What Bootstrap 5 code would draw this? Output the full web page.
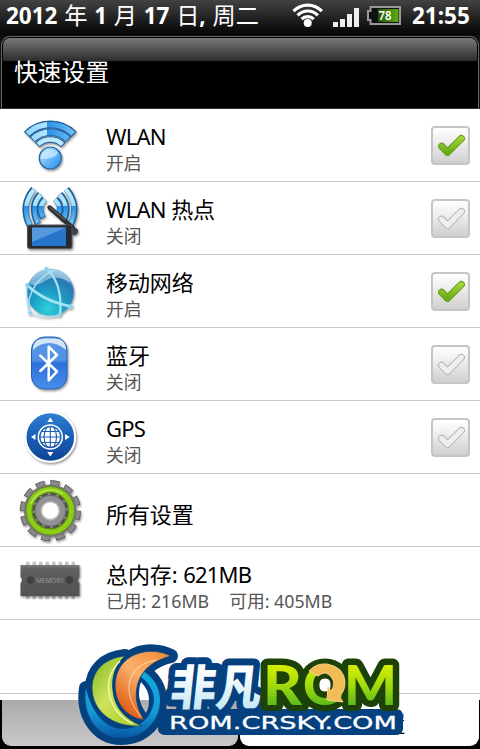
<!DOCTYPE html>
<html lang="zh-CN">

<head>
    <meta charset="UTF-8">
    <meta name="viewport" content="width=device-width, initial-scale=1.0">
    <title>快速设置</title>
    <link href="https://cdn.jsdelivr.net/npm/bootstrap@5.3.3/dist/css/bootstrap.min.css" rel="stylesheet">
    <style>
        body {
            background: #fff;
            font-family: "Noto Sans", "Noto Sans CJK SC", sans-serif;
            color: #000;
        }

        .phone {
            width: 480px;
            height: 749px;
        }

        .status-bar {
            height: 35px;
            padding: 0 8px 4px 6px;
            background: linear-gradient(#424242, #101010 80%, #050505);
            font-size: 23.2px;
            line-height: 31px;
            word-spacing: .7px;
        }

        .status-bar b {
            font-size: 22.5px;
            font-weight: 700;
        }

        .clock {
            width: 60px;
            margin-left: 8px;
        }

        .title-wrap {
            height: 74px;
            background: #111;
            padding: 1px 1px 0;
        }

        .title-bar {
            height: 73px;
            padding: 1px 0 0 12px;
            border: 1px solid #666;
            border-bottom-color: #333;
            border-radius: 9px 9px 0 0;
            box-shadow: inset 0 0 0 1px #000;
            background: linear-gradient(#7c7c7c, #2c2c2c 24px, #000 24px);
            font-size: 23.8px;
        }

        .setting {
            height: 73px;
            border-bottom: 1px solid #c9c9c9;
        }

        .setting.blank {
            height: 74px;
        }

        .setting > svg {
            width: 100px;
            height: 72px;
        }

        .texts {
            padding-top: 7px;
        }

        .label {
            padding-left: 6px;
            font-size: 22px;
            line-height: 28px;
            letter-spacing: -.1px;
        }

        .label i,
        .state i {
            font-style: normal;
            letter-spacing: -.8px;
        }

        .state {
            padding: 1px 0 0 6px;
            color: #555;
            font-size: 17.8px;
            line-height: 25px;
        }

        .state i {
            letter-spacing: 0;
        }

        .state .free {
            margin-left: 20px;
        }

        .tick {
            width: 39px;
            height: 39px;
            margin-right: 10px;
            border: 2px solid #c5c5c5;
            border-radius: 4px;
            background: linear-gradient(#fff, #f0f0f0 35%, #cfcfcf);
        }

        .tabs {
            height: 49px;
            background: #000;
            padding: 0 1px 3px 2px;
            gap: 2px;
        }

        .tab-left {
            width: 236px;
            border-radius: 0 0 9px 9px;
            background: linear-gradient(#aaa, #c9c9c9);
        }

        .tab-right {
            border-radius: 0 0 9px 9px;
            background: #fff;
            font-size: 22px;
            line-height: 30px;
            padding: 8px 0 0 4px;
        }

        .logo {
            left: 70px;
            top: 635px;
        }
    </style>
</head>

<body>
    <svg width="0" height="0" class="position-absolute">
        <defs>
            <linearGradient id="ball" x1="0" y1="0" x2="1" y2="1">
                <stop offset="0" stop-color="#c3e8ff" />
                <stop offset=".45" stop-color="#75c0fb" />
                <stop offset="1" stop-color="#218be8" />
            </linearGradient>
            <linearGradient id="half" gradientUnits="userSpaceOnUse" x1="26" y1="0" x2="76" y2="0">
                <stop offset="0" stop-color="#8fd2fb" />
                <stop offset=".42" stop-color="#b5e7ff" />
                <stop offset=".43" stop-color="#2e93e8" />
                <stop offset="1" stop-color="#6fc0f6" />
            </linearGradient>
            <linearGradient id="waves" gradientUnits="userSpaceOnUse" x1="0" y1="6" x2="0" y2="44">
                <stop offset="0" stop-color="#c0edff" />
                <stop offset=".46" stop-color="#a5dffc" />
                <stop offset=".47" stop-color="#248fe6" />
                <stop offset="1" stop-color="#7ccbf8" />
            </linearGradient>
            <linearGradient id="green" x1="0" y1="0" x2="0" y2="1">
                <stop offset="0" stop-color="#a0d23a" />
                <stop offset="1" stop-color="#6dab14" />
            </linearGradient>
            <filter id="soft" x="-20%" y="-20%" width="140%" height="150%">
                <feDropShadow dx="1" dy="1.5" stdDeviation="1.2" flood-opacity=".45" />
            </filter>
            <symbol id="tickmark" viewBox="0 0 35 35">
                <path d="M8.700 18.300l5.800 6L28.300 10.500" fill="none" stroke-linecap="round" stroke-linejoin="round" stroke="var(--edge)" stroke-width="7.200" />
                <path d="M8.700 18.300l5.800 6L28.300 10.500" fill="none" stroke-linecap="round" stroke-linejoin="round" stroke="var(--ink)" stroke-width="5.400" />
            </symbol>
        </defs>
    </svg>

    <div class="phone position-relative overflow-hidden d-flex flex-column">
        <div class="status-bar d-flex align-items-center text-white text-nowrap">
            <div><b>2012</b> 年 <b>1</b> 月 <b>17</b> 日<b>,</b> 周二</div>
            <svg class="ms-auto" width="112" height="31" viewBox="292 0 112 31">
                <g fill="none" stroke="#fff" stroke-width="3.200">
                    <path d="M293.500 11.200a19.500 19.500 0 0 1 28.400 0" />
                    <path d="M297.600 15.300a14 14 0 0 1 20.200 0" />
                    <path d="M301.600 19.200a8.500 8.500 0 0 1 12.200 0" />
                </g>
                <circle cx="307.700" cy="23" r="4" fill="#fff" />
                <path d="M333 22h5v5h-5zM340 19h5v8h-5zM347 14h5v13h-5zM354 8h5v19h-5z" fill="#eee" />
                <path d="M370.500 7H400v17H370.500v-4H368v-9h2.500z" fill="#111" stroke="#999" stroke-width="2" />
                <linearGradient id="charge">
                    <stop offset="0" stop-color="#23550b" />
                    <stop offset="1" stop-color="#5fae13" />
                </linearGradient>
                <path d="M378 9h20.500v13H378z" fill="url(#charge)" />
                <text x="385" y="20" text-anchor="middle" font-size="12.500" font-weight="600" fill="#fff" textLength="13" lengthAdjust="spacingAndGlyphs" word-spacing="0">78</text>
            </svg>
            <b class="clock">21:55</b>
        </div>
        <div class="title-wrap">
            <div class="title-bar d-flex align-items-center text-white">快速设置</div>
        </div>

        <!-- Liste des réglages -->
        <div class="setting d-flex align-items-center">
            <svg viewBox="0 0 100 72">
                <g fill="none" filter="url(#soft)">
                    <g stroke="#1d5c98" stroke-width="7.600">
                        <path d="M26.600 25.300a33 33 0 0 1 47.400 0M32 30.700a25.500 25.500 0 0 1 36.600 0" />
                        <path d="M37.300 36a18 18 0 0 1 26 0" stroke-width="6.600" />
                    </g>
                    <g stroke="url(#half)" stroke-width="5.600">
                        <path d="M27.400 24.700a33 33 0 0 1 45.800 0M32.800 30.100a25.500 25.500 0 0 1 35 0" />
                        <path d="M38 35.400a18 18 0 0 1 24.600 0" stroke="#bce9fd" stroke-width="4.600" />
                    </g>
                    <circle cx="50.300" cy="49" r="11" fill="url(#ball)" stroke="#28659e" stroke-width="1.200" />
                    <path d="M41 50a9.500 9.500 0 0 1 17-6q-3 6-17 6z" fill="#e1f5ff" opacity=".6" />
                </g>
            </svg>
            <div class="texts flex-grow-1">
                <div class="label"><i>WLAN</i></div>
                <div class="state">开启</div>
            </div>
            <div class="tick" style="--edge:#5c9c12;--ink:url(#green)"><svg class="d-block" width="35" height="35"><use href="#tickmark" /></svg></div>
        </div>
        <div class="setting d-flex align-items-center">
            <svg viewBox="0 0 100 72">
                <g fill="none" filter="url(#soft)">
                    <path d="M33.500 7Q19.500 24 30 44M40 12Q29 24 38 42M44.500 17Q36.500 25 43 36M66.500 7Q80.500 24 70 44M60 12Q71 24 63 40M55.500 17Q63.500 25 58 33" stroke="#205f93" stroke-width="6.200" />
                    <path d="M34 7.700Q20.500 24 30 43M40.500 12.700Q30 24 38 41M45 17.700Q37.500 25 43 35M66 7.700Q79.500 24 70 43M59.500 12.700Q70 24 63 39M55 17.700Q62.500 25 58 32" stroke="url(#waves)" stroke-width="4.200" />
                    <path d="M49.500 25.500L73 46" stroke="#2d2d2d" stroke-width="4.400" stroke-linecap="round" />
                    <path d="M49.500 25L65 38" stroke="#777" stroke-width="1" />
                    <path d="M70 46h5q3 0 3 3t-3 4h-5z" fill="#3b3f43" />
                    <rect x="27.500" y="43" width="44.500" height="23.500" rx="2" fill="#25292e" stroke="#56595d" />
                    <rect x="32" y="45.500" width="34" height="18.500" fill="#2675ca" />
                    <path d="M32 45.500h34L32 60z" fill="#6faee9" opacity=".65" />
                </g>
            </svg>
            <div class="texts flex-grow-1">
                <div class="label"><i>WLAN</i> 热点</div>
                <div class="state">关闭</div>
            </div>
            <div class="tick" style="--edge:#b0b0b0;--ink:#eee"><svg class="d-block" width="35" height="35"><use href="#tickmark" /></svg></div>
        </div>
        <div class="setting d-flex align-items-center">
            <svg viewBox="0 0 100 72">
                <radialGradient id="globe" cx=".45" cy=".85" r=".9">
                    <stop offset="0" stop-color="#2fd0da" />
                    <stop offset=".4" stop-color="#1d9fc5" />
                    <stop offset=".75" stop-color="#2c78b5" />
                    <stop offset="1" stop-color="#8bc6e8" />
                </radialGradient>
                <g filter="url(#soft)">
                    <circle cx="50.300" cy="37.300" r="23.500" fill="url(#globe)" />
                    <path d="M29 29Q34 15 49 14q17 1 22 14Q56 18 43 27q-6 5-14 2z" fill="#e3f7ff" opacity=".45" />
                    <g fill="none" stroke="#a4e3f3" stroke-linecap="round">
                        <path d="M26.500 29.500Q43 46 71 51.500" stroke-width="2.800" />
                        <path d="M46.500 13Q63 29 60 60" stroke-width="2.200" />
                        <path d="M29 59Q26 44 36 29Q44 19 55 15" stroke-width="1.400" />
                        <path d="M27 29q-1 20 3 29 14 6 30 2" stroke-width="1.600" opacity=".7" />
                    </g>
                    <g fill="#8ad5eb">
                        <circle cx="46.500" cy="14" r="2.200" />
                        <circle cx="27.500" cy="30.500" r="1.900" />
                        <circle cx="70.500" cy="51.500" r="2.200" />
                        <circle cx="59.500" cy="59.500" r="2" />
                        <circle cx="30.500" cy="57.500" r="1.700" />
                    </g>
                </g>
            </svg>
            <div class="texts flex-grow-1">
                <div class="label">移动网络</div>
                <div class="state">开启</div>
            </div>
            <div class="tick" style="--edge:#5c9c12;--ink:url(#green)"><svg class="d-block" width="35" height="35"><use href="#tickmark" /></svg></div>
        </div>
        <div class="setting d-flex align-items-center">
            <svg viewBox="0 0 100 72">
                <linearGradient id="bt" x1="0" y1="0" x2="0" y2="1">
                    <stop offset="0" stop-color="#5798e6" />
                    <stop offset=".45" stop-color="#5090e6" />
                    <stop offset=".5" stop-color="#2d6fdc" />
                    <stop offset="1" stop-color="#468eea" />
                </linearGradient>
                <g filter="url(#soft)">
                    <rect x="31.500" y="9" width="35.500" height="52" rx="13" fill="url(#bt)" stroke="#2860ac" />
                    <path d="M33 22Q33 10.500 45 10.500h8.500Q66 10.500 66 22 58 15 49 15T33 22z" fill="#fff" opacity=".75" />
                </g>
                <path d="M40.300 27.700L57 43.500 48.700 52.300V18.700L57 27 40.300 43" fill="none" stroke="#fff" stroke-width="2.500" stroke-linecap="round" stroke-linejoin="round" />
            </svg>
            <div class="texts flex-grow-1">
                <div class="label">蓝牙</div>
                <div class="state">关闭</div>
            </div>
            <div class="tick" style="--edge:#b0b0b0;--ink:#eee"><svg class="d-block" width="35" height="35"><use href="#tickmark" /></svg></div>
        </div>
        <div class="setting d-flex align-items-center">
            <svg viewBox="0 0 100 72">
                <linearGradient id="gps" x1="0" y1="0" x2="0" y2="1">
                    <stop offset="0" stop-color="#3180d3" />
                    <stop offset=".6" stop-color="#1458b0" />
                    <stop offset="1" stop-color="#104591" />
                </linearGradient>
                <circle cx="50.300" cy="36" r="24.800" fill="url(#gps)" stroke="#fff" stroke-width="2" filter="url(#soft)" />
                <circle cx="50.300" cy="36" r="12" fill="none" stroke="#fff" stroke-width="1.500" />
                <circle cx="50.300" cy="36" r="9.800" fill="#fff" />
                <path d="M50.300 26v20M40 36h21M42 30.500h17M42 41.500h17M47 26q-6 10 0 20M53.600 26q6 10 0 20" fill="none" stroke="#1a5eb5" stroke-width="1.100" />
                <path d="M50.300 16.500l3 4.500h-6zM50.300 55.500l3-4.500h-6zM31 36l4.500-3v6zM69.600 36L65 33v6z" fill="#fff" />
            </svg>
            <div class="texts flex-grow-1">
                <div class="label"><i>GPS</i></div>
                <div class="state">关闭</div>
            </div>
            <div class="tick" style="--edge:#b0b0b0;--ink:#eee"><svg class="d-block" width="35" height="35"><use href="#tickmark" /></svg></div>
        </div>
        <div class="setting d-flex align-items-center">
            <svg viewBox="0 0 100 72">
                <g fill="none" filter="url(#soft)">
                    <circle cx="50.300" cy="36.700" r="27.800" stroke="#555" stroke-width="5.600" pathLength="96" stroke-dasharray="5 3" />
                    <circle cx="50.300" cy="36.700" r="27.300" stroke="#8b8b8b" stroke-width="5" pathLength="96" stroke-dasharray="4.300 3.700" stroke-dashoffset="-.350" />
                    <circle cx="50.300" cy="36.700" r="24.800" fill="#8b8b8b" stroke="#777" stroke-width="3" />
                    <circle cx="50.300" cy="36.700" r="21" stroke="#5d8e10" stroke-width="7" />
                    <circle cx="50.300" cy="36.700" r="21.300" stroke="#8ccb18" stroke-width="5" />
                    <path d="M31 30a21 21 0 0 1 32-10" stroke="#b9e553" stroke-width="1.600" />
                    <circle cx="50.300" cy="36.700" r="16.700" stroke="#444" stroke-width="1.600" pathLength="60" stroke-dasharray="3.500 1.500" />
                    <circle cx="50.300" cy="36.700" r="11.700" stroke="#6a6a6a" stroke-width="8" />
                    <circle cx="50.300" cy="36.700" r="12" stroke="#929292" stroke-width="5.500" />
                    <circle cx="50.300" cy="36.700" r="9" fill="#fff" stroke="#bbb" stroke-width="1.500" />
                </g>
            </svg>
            <div class="texts">
                <div class="label">所有设置</div>
            </div>
        </div>
        <div class="setting d-flex align-items-center">
            <svg viewBox="0 0 100 72">
                <path d="M26 16.500h49M26 50.500h49" stroke="#c5c5c5" stroke-width="3.500" stroke-dasharray="3.600 2.900" />
                <linearGradient id="chip" x1="0" y1="0" x2="0" y2="1">
                    <stop offset="0" stop-color="#777" />
                    <stop offset=".15" stop-color="#5f5f5f" />
                    <stop offset="1" stop-color="#515151" />
                </linearGradient>
                <path d="M20.500 18h59v12q-3 3 0 6v13h-59V36q3-3 0-6z" fill="url(#chip)" filter="url(#soft)" />
                <circle cx="30.500" cy="33" r="3.700" fill="#3f3f3f" />
                <circle cx="69.500" cy="33" r="3.700" fill="#3f3f3f" />
                <text x="36" y="36" font-size="7.500" fill="#999" textLength="28" lengthAdjust="spacingAndGlyphs">MEMORY</text>
            </svg>
            <div class="texts">
                <div class="label">总内存: <i>621MB</i></div>
                <div class="state">已用: <i>216MB</i><span class="free">可用: <i>405MB</i></span></div>
            </div>
        </div>
        <div class="setting blank"></div>

        <div class="flex-grow-1"></div>
        <div class="tabs d-flex">
            <div class="tab-left"></div>
            <div class="tab-right flex-grow-1 text-center">快速设置</div>
        </div>

        <!-- Logo posé par-dessus les onglets -->
        <svg class="logo position-absolute" width="340" height="114" viewBox="70 635 340 114">
            <defs>
                <linearGradient id="lime" x1="0" y1="0" x2="1" y2="1">
                    <stop offset="0" stop-color="#7fb51f" />
                    <stop offset=".45" stop-color="#cde25a" />
                    <stop offset="1" stop-color="#a4c91c" />
                </linearGradient>
                <linearGradient id="amber" x1="1" y1="0" x2="0.300" y2="1">
                    <stop offset="0" stop-color="#ee8a33" />
                    <stop offset=".5" stop-color="#fbb06b" />
                    <stop offset="1" stop-color="#dd5a12" />
                </linearGradient>
                <linearGradient id="aqua" x1="0" y1="0" x2="0" y2="1">
                    <stop offset="0" stop-color="#12a9df" />
                    <stop offset=".6" stop-color="#159bd6" />
                    <stop offset="1" stop-color="#0757a5" />
                </linearGradient>
                <linearGradient id="hole" gradientUnits="userSpaceOnUse" x1="0" y1="680" x2="0" y2="720">
                    <stop offset=".5" stop-color="#fff" />
                    <stop offset=".5" stop-color="#adadad" />
                    <stop offset="1" stop-color="#bbb" />
                </linearGradient>
                <linearGradient id="rom" gradientUnits="userSpaceOnUse" x1="0" y1="664" x2="0" y2="706">
                    <stop offset="0" stop-color="#d9ee00" />
                    <stop offset=".5" stop-color="#a5db0c" />
                    <stop offset="1" stop-color="#58b81b" />
                </linearGradient>
                <linearGradient id="ice" x1="0" y1="0" x2="0" y2="1">
                    <stop offset=".3" stop-color="#fff" />
                    <stop offset="1" stop-color="#b9e2f5" />
                </linearGradient>
                <path id="ring" d="M86 688C82 715 97 738 121 738 145 738 160 720 160 700 160 687 153 677 143 671L141 677C149 683 154 691 154 700 153 716 140 729 123 729 105 729 91 712 86 688z" />
                <path id="leaf" d="M125 656C104 658 92 671 92 688 92 709 110 728 142 726 126 719 115 709 113 691 111 677 116 664 125 656z" />
                <path id="flame" d="M171 656C150 645 116 653 115 685 115 705 128 718 144 720 137 708 134 697 138 683 142 669 155 660 171 656z" />
            </defs>
            <g fill="#06417f" stroke="#06417f" stroke-width="14" stroke-linejoin="round">
                <use href="#ring" />
                <use href="#leaf" />
                <use href="#flame" />
            </g>
            <path d="M141 682q8 8 8 18 0 8-3 13-6-8-7-18 0-8 2-13z" fill="url(#hole)" />
            <use href="#ring" fill="url(#aqua)" />
            <use href="#leaf" fill="url(#lime)" stroke="#06417f" stroke-width=".8" />
            <path d="M120 661q-14 14-11 32 4 21 24 31" fill="none" stroke="#eff7b0" stroke-width="1.400" />
            <use href="#flame" fill="url(#amber)" stroke="#06417f" stroke-width=".8" />
            <path d="M156 660q-22 3-27 23-2 17 12 34" fill="none" stroke="#ffe3c0" stroke-width="1" opacity=".8" />

            <path d="M164 709h232q6 0 7 6v13q-1 7-7 7H165q-7-1-7-7v-12q0-7 6-7z" fill="#06417f" />
            <g transform="translate(169 704.500) skewX(-6)" font-family="Noto Sans CJK SC" font-weight="900" font-size="48">
                <text textLength="91" lengthAdjust="spacingAndGlyphs" stroke="#06417f" stroke-width="14" stroke-linejoin="round" fill="#06417f">非凡</text>
                <text textLength="91" lengthAdjust="spacingAndGlyphs" fill="url(#ice)">非凡</text>
            </g>
            <g font-family="Lato, sans-serif" font-weight="900" font-size="56" fill="url(#rom)" stroke="#1d4207" stroke-width="13" stroke-linejoin="round" paint-order="stroke">
                <text x="263" y="705" textLength="39" lengthAdjust="spacingAndGlyphs">R</text>
                <text x="303" y="705" textLength="44" lengthAdjust="spacingAndGlyphs">O</text>
                <text x="344" y="705" textLength="53" lengthAdjust="spacingAndGlyphs">M</text>
            </g>
            <path d="M309 671q7-8 18-7 17 3 18 18 0 10-6 14l4 6-16-2 1-13 3 4q5-7 1-13-6-9-14-2z" fill="#f3bb55" stroke="#f8d588" />
            <path d="M164 711h232q6 0 7 5v12q-1 7-7 7H165q-7-1-7-7v-11q0-6 6-6z" fill="#06417f" />
            <text x="169" y="728.500" font-family="DejaVu Sans, sans-serif" font-size="18" fill="#fff" stroke="#fff" stroke-width=".3" textLength="228" lengthAdjust="spacingAndGlyphs">ROM.CRSKY.COM</text>
        </svg>
    </div>
    <script src="https://cdn.jsdelivr.net/npm/bootstrap@5.3.3/dist/js/bootstrap.bundle.min.js"></script>
</body>

</html>
